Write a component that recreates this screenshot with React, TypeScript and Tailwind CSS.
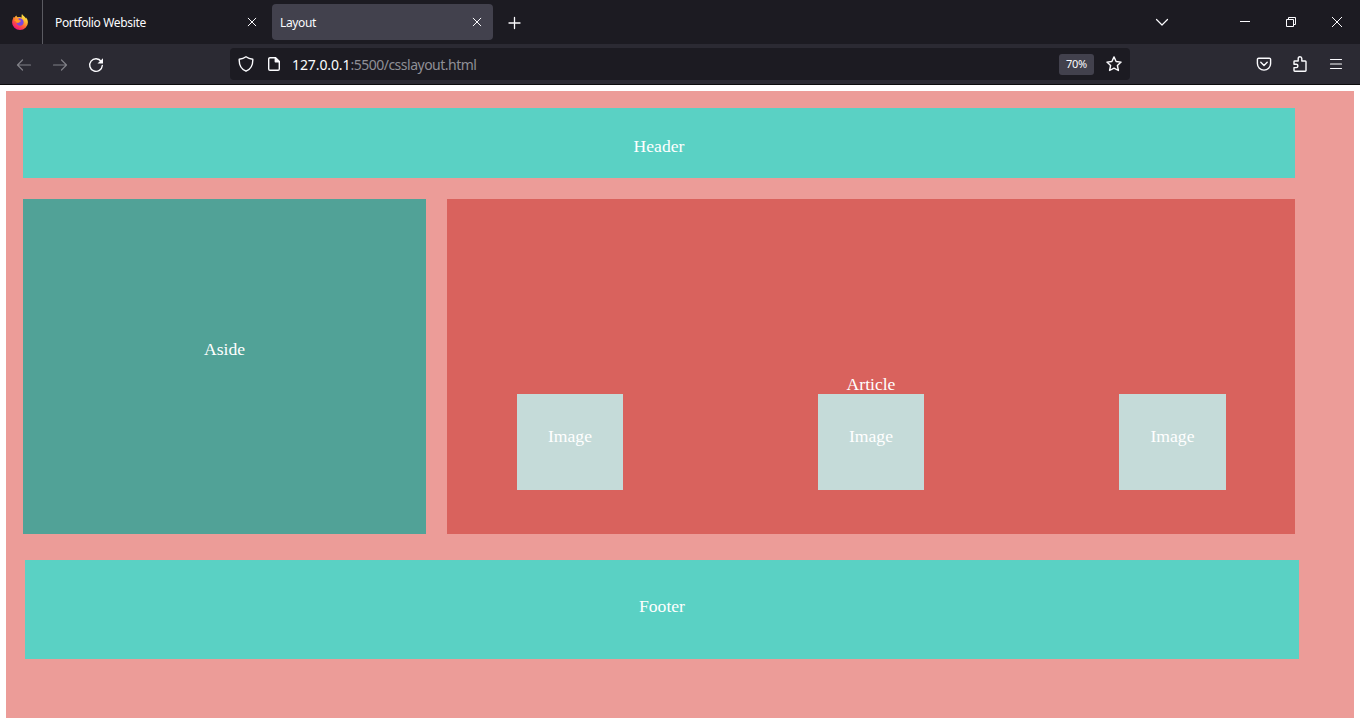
import React from "react";

type IconProps = { d: string; className?: string; size?: number; w?: number };

function Icon({ d, className = "", size = 16, w = 1.4 }: IconProps) {
  return (
    <svg
      width={size}
      height={size}
      viewBox={`0 0 ${size} ${size}`}
      fill="none"
      stroke="currentColor"
      strokeWidth={w}
      strokeLinecap="round"
      strokeLinejoin="round"
      className={`shrink-0 ${className}`}
    >
      <path d={d} />
    </svg>
  );
}

function FirefoxLogo() {
  return (
    <svg width="16" height="16" viewBox="0 0 16 16" className="shrink-0">
      <defs>
        <linearGradient id="fx-body" x1="0.85" y1="0.05" x2="0.25" y2="0.95">
          <stop offset="0" stopColor="#fff44f" />
          <stop offset="0.35" stopColor="#ffb52e" />
          <stop offset="0.65" stopColor="#ff5a36" />
          <stop offset="1" stopColor="#f0117e" />
        </linearGradient>
      </defs>
      <path
        d="M10 0c-.5 1.500-.6 2.700-.2 3.600C8.500 2.900 7.200 2.900 6 3.200 5 3 4.500 2.400 4.400 1.500 3.400 2 2.900 2.800 2.700 3.600L1.600 2.900C1.400 4 .1 5.800.1 8.400a7.900 7.500 0 0 0 15.800 0c0-2-.7-3.900-1.800-5l.1 1.300C13.300 2.700 10.800 2 10 0Z"
        fill="url(#fx-body)"
      />
      <path d="M6.200 4.600c2.200-1.200 5.300.5 5.500 3.400.1 2.300-1.600 3.700-3.600 3.700S4.600 10.300 4.500 8.500c1 .6 2.200.5 2.900-.1.500-.4 1.300-.6 1.400-1.300C8.200 6.600 6.500 6.500 6.200 4.600Z" fill="#7a46e0" />
      <path d="M2 6.200c1.200-1.200 2.900-1.300 4.100-.3.600.6 1.700.6 2.700.7-.2.900-1.700 1-2 1.700-.6.700-1.700.7-2.400.2C4.100 7.500 3.100 6.600 2 6.200Z" fill="#ff9a22" />
    </svg>
  );
}

const CLOSE = "M4.200 4.200l7.600 7.600M11.800 4.200l-7.600 7.600";

function TabBar() {
  return (
    <div className="flex h-11 bg-[#1c1b22] text-[#fbfbfe]">
      <div className="flex w-[43px] items-center border-r border-[#5b5b62] pl-3">
        <FirefoxLogo />
      </div>
      <div className="flex w-[229px] items-center justify-between pr-3 pl-3">
        <span className="pt-0.5 text-[12px] tracking-[-0.35px]">Portfolio Website</span>
        <Icon d={CLOSE} w={1} />
      </div>
      <div className="my-1 flex w-[221px] items-center justify-between rounded bg-[#42414d] pr-2 pl-2">
        <span className="pt-0.5 text-[12px] tracking-[-0.35px]">Layout</span>
        <Icon d={CLOSE} w={1} />
      </div>
      <div className="flex w-[43px] items-center justify-center pt-px">
        <Icon d="M7.500 2.500v11M2 8h11" w={1.3} />
      </div>
      <div className="ml-auto flex items-center">
        <Icon d="M2.500 5.500L8 11l5.500-5.500" w={1.2} className="mr-[67px]" />
        <svg width="16" height="16" fill="none" stroke="currentColor" className="mr-[30px]">
          <path d="M3 7.500h10" />
        </svg>
        <svg width="16" height="16" fill="none" stroke="currentColor" className="mr-[30px]">
          <path d="M3.500 5.500h7v7h-7zM5.500 5.500v-2h7v7h-2" />
        </svg>
        <svg width="16" height="16" fill="none" stroke="currentColor" className="mr-[15px]">
          <path d="M3 3l10 10M13 3L3 13" />
        </svg>
      </div>
    </div>
  );
}

function Toolbar() {
  return (
    <div className="flex h-[41px] items-center border-b border-[#0c0c0d] bg-[#2b2a33] text-[#fbfbfe]">
      <div className="flex w-[230px] gap-5 pt-px pl-4">
        <Icon d="M1.500 8h13M6.500 3L1.500 8l5 5" w={1.2} className="text-[#808087]" />
        <Icon d="M1.500 8h13M9.500 3l5 5-5 5" w={1.2} className="text-[#808087]" />
        <svg width="16" height="16" viewBox="0 0 16 16" fill="none" className="shrink-0">
          <path d="M13.200 4.500A6.300 6.300 0 1 0 14.300 8.500" stroke="currentColor" strokeWidth="1.4" strokeLinecap="round" />
          <path d="M15 1.200v5.300H9.500z" fill="currentColor" />
        </svg>
      </div>
      <div className="flex h-8 w-[900px] items-center rounded bg-[#1c1b22] pr-2 pl-2">
        <Icon d="M8 .8C6 2.200 3.800 2.900 1.200 3.200 1 8.500 3.200 13.300 8 15.200c4.800-1.900 7-6.700 6.800-12C12.200 2.900 10 2.200 8 .8Z" />
        <svg width="16" height="16" viewBox="0 0 16 16" className="ml-3 shrink-0" fill="none" stroke="currentColor" strokeWidth="1.4" strokeLinejoin="round">
          <path d="M9.500 1.700H4A1.300 1.300 0 0 0 2.700 3v10A1.300 1.300 0 0 0 4 14.300h8a1.300 1.300 0 0 0 1.300-1.300V5.500z" />
          <path d="M9.300 1.700v4h4z" fill="currentColor" />
        </svg>
        <span className="ml-[10px] pt-px text-[14px] tracking-[-0.1px]">
          127.0.0.1<span className="tracking-[-0.5px] text-[#8f8f96]">:5500/csslayout.html</span>
        </span>
        <span className="ml-auto flex h-[21px] w-[35px] items-center justify-center rounded-[3px] bg-[#42414d] pt-px text-[11px] tracking-[-0.2px]">
          70%
        </span>
        <Icon
          className="ml-3"
          d="M8 .9l2.100 4.600 5 .6-3.700 3.400 1 5L8 12.100l-4.400 2.400 1-5L.9 6.100l5-.6z"
        />
      </div>
      <div className="ml-auto flex gap-5 pr-4">
        <Icon d="M2.700 2.200h10.600a1.300 1.300 0 0 1 1.300 1.300v4a6.600 6.600 0 0 1-13.200 0v-4a1.300 1.300 0 0 1 1.300-1.300ZM4.800 6.300L8 9.400l3.200-3.100" />
        <Icon d="M2.700 15.300a.7.700 0 0 1-.7-.7V11.600h2.200a1.700 1.700 0 0 0 0-3.400H2V5.700a.7.700 0 0 1 .7-.7h3.500V2.600a1.800 1.800 0 0 1 3.600 0V5h3.500a.7.700 0 0 1 .7.700v8.900a.7.700 0 0 1-.7.700z" />
        <Icon d="M2.500 3.500h11M2.500 8h11M2.500 12.500h11" w={1.2} />
      </div>
    </div>
  );
}

function ImageBox({ className = "w-[106px]" }: { className?: string }) {
  return <div className={`h-24 bg-[#c5dbd9] pt-8 ${className}`}>Image</div>;
}

function Page() {
  return (
    <main className="mx-1.5 mt-1.5 h-[627px] bg-[#ec9c98] pt-[17px] pl-[17px] text-center font-['Liberation_Serif',serif] text-[17.6px] leading-[20px] text-white">
      <header className="h-[70px] w-[1272px] bg-[#5ad1c4] pt-[28px]">Header</header>
      <div className="mt-[21px] flex gap-[21px]">
        <aside className="h-[335px] w-[403px] bg-[#51a297] pt-[140px]">Aside</aside>
        <article className="h-[335px] w-[848px] bg-[#d9625d] pt-[175px] pl-[70px]">
          <div className="mr-[70px] h-[20px]">Article</div>
          <div className="flex gap-[195px]">
            <ImageBox />
            <ImageBox />
            <ImageBox className="w-[107px]" />
          </div>
        </article>
      </div>
      <footer className="mt-[26px] ml-[2px] h-[99px] w-[1274px] bg-[#5ad1c4] pt-[36px]">Footer</footer>
    </main>
  );
}

export default function App() {
  return (
    <div className="h-[728px] w-[1360px] overflow-hidden bg-white font-['Noto_Sans','Open_Sans',sans-serif]">
      <TabBar />
      <Toolbar />
      <Page />
    </div>
  );
}
